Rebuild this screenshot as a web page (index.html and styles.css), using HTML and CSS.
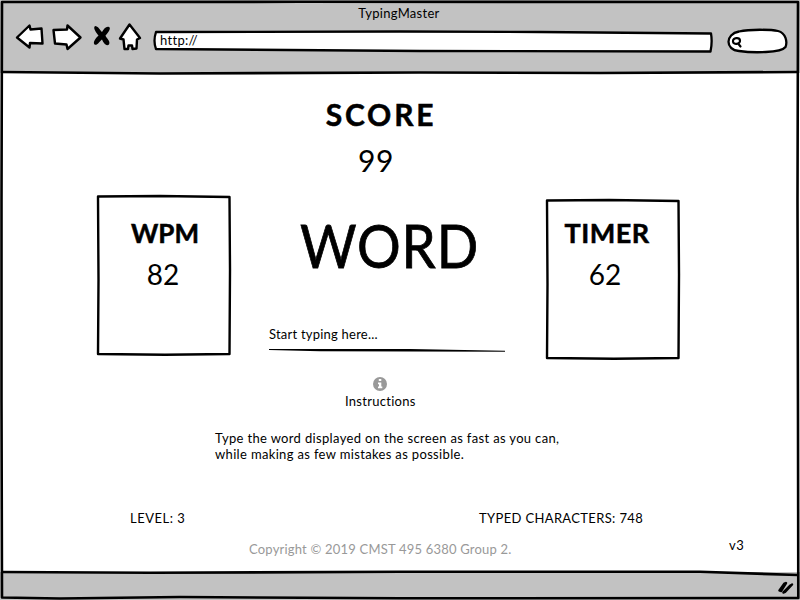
FILE: index.html
```html
<!DOCTYPE html>
<html lang="en">
<head>
<meta charset="utf-8">
<title>TypingMaster</title>
<link rel="stylesheet" href="styles.css">
</head>
<body>
<div class="browser">
  <header class="chrome">
    <div class="title">TypingMaster</div>
    <div class="toolbar">
      <svg class="nav" width="128" height="32" viewBox="14 21 128 32">
        <g fill="#fff" stroke="#000" stroke-width="2.4" stroke-linejoin="round" stroke-linecap="round">
          <path d="M17 37.5 L29.5 25.500 L30.5 29.500 L41.500 28.5 L42.500 43.500 L30 43 L29.5 47.500 Z"/>
          <path d="M53.5 30 L67 29.5 L67.500 25.500 L80.5 37.5 L67.500 49 L66.5 44.5 L55 43.500 Z"/>
          <path d="M129.5 24.5 L140 38 L137 39.500 L136.500 48.500 L132.500 49 L132 45.500 L128.500 45.500 L128 49 L124.500 49 L123.500 39.500 L120 38.500 Z"/>
        </g>
        <path d="M95 26 C98 26 100 30 102 32 C104 29 106 26 109 27 C111.500 28 108 33 105.500 35.500 C106 38 111 41 109 44.500 C106 47 103 42 102 39.500 C99 42 97 46 94.500 44.500 C92.500 42 96 38 98.500 35.500 C96.500 33 92.500 28 95 26 Z" fill="#000"/>
      </svg>
      <div class="address">
        <svg class="outline" width="562" height="24" viewBox="152 29 562 24"><path d="M156 32 L400 31.500 L540 32 L711 33.500 Q712.500 42 710.500 51.500 L420 51 L156 49 Q153 41 156 32 Z" fill="#fff" stroke="#000" stroke-width="2.300" stroke-linejoin="round"/></svg>
        <span class="url">http://</span>
      </div>
      <svg class="search" width="62" height="28" viewBox="727 27 62 28">
        <path d="M739 51 C725 50 725 34 739 31.500 C750 29 771 29.500 778 31 C786 33 787.500 42 785.500 47 C781 53 753 53 739 51 Z" fill="#fff" stroke="#000" stroke-width="2.300"/>
        <path d="M733 41.500 C732.500 37.500 739.500 37 740 40.500 C740.500 44.500 733 45 733 41.500 M738.500 44 L740.500 46.500" fill="none" stroke="#000" stroke-width="2.200" stroke-linecap="round"/>
      </svg>
    </div>
  </header>

  <main class="page">
    <section class="score">
      <h1 class="heading score-heading">SCORE</h1>
      <div class="value score-value">99</div>
    </section>
    <section class="board">
      <div class="card card-wpm">
        <svg class="outline" width="136" height="162" viewBox="96 194 136 162"><path d="M98 196.500 L160 196 L229.500 197 L230 270 L229.500 354 L165 354.700 L98 354 L98.500 280 Z" fill="#fff" stroke="#000" stroke-width="2.400" stroke-linejoin="round"/></svg>
        <h2 class="heading card-heading wpm-heading">WPM</h2>
        <div class="value card-value">82</div>
      </div>
      <div class="play">
        <div class="word">WORD</div>
        <div class="prompt">Start typing here...</div>
        <svg class="rule" width="236" height="5" viewBox="269 348 236 5"><path d="M269 349 L410 349 L505 350.800 V351.800 L320 351.300 L269 350 Z"/></svg>
      </div>
      <div class="card card-timer">
        <svg class="outline" width="136" height="162" viewBox="96 194 136 162"><path d="M98 196.500 L160 196 L229.500 197 L230 270 L229.500 354 L165 354.700 L98 354 L98.500 280 Z" fill="#fff" stroke="#000" stroke-width="2.400" stroke-linejoin="round"/></svg>
        <h2 class="heading card-heading timer-heading">TIMER</h2>
        <div class="value card-value">62</div>
      </div>
    </section>
    <section class="help">
      <svg class="info" width="14" height="14" viewBox="0 0 14 14"><circle cx="7" cy="7" r="7" fill="#999"/><path d="M5.800 2 h2.500 v2 h-2.500z M5 5.500 h3.300 v4 h1 v1.700 H5 V9.500 h1 V7.200 H5z" fill="#fff"/></svg>
      <div class="help-label">Instructions</div>
      <p class="help-text"><span class="line line-a">Type the word displayed on the screen as fast as you can,</span><span class="line line-b">while making as few mistakes as possible.</span></p>
    </section>
    <section class="stats">
      <div class="level">LEVEL: 3</div>
      <div class="typed">TYPED CHARACTERS: 748</div>
    </section>
    <section class="legal">
      <div class="copyright">Copyright © 2019 CMST 495 6380 Group 2.</div>
      <div class="version">v3</div>
    </section>
  </main>

  <footer class="status">
    <svg class="grip" width="18" height="16" viewBox="778 579 18 16"><path d="M780.500 590.500 L785.500 583.500 M782 591 L787 583 M786 592 L793 584.500 M784.500 592.500 L791.500 585.500" stroke="#000" stroke-width="2.500" stroke-linecap="round"/></svg>
  </footer>

  <svg class="frame" width="800" height="600" viewBox="0 0 800 600">
    <g fill="none" stroke="#000" stroke-width="2.600" stroke-linejoin="round">
      <path d="M2 2 L300 1.800 L798 2 L797.500 200 L798 420 L798.300 598 L400 598.300 L180 597 L60 598.500 L2 597.500 L1.500 400 L1.500 200 Z"/>
      <path d="M2 72 L160 73.500 L420 72.500 L600 73 L798 72"/>
      <path d="M2 572 L150 572.800 L400 571.800 L700 571.800 L798 575"/>
    </g>
  </svg>
</div>
</body>
</html>
```
FILE: styles.css
```css
* { box-sizing: border-box; }
body {
  margin: 0;
  background: #fff;
  color: #000;
  font: 13px/16px Lato, "Liberation Sans", sans-serif;
  white-space: nowrap;
}
.browser {
  position: relative;
  display: flex;
  flex-direction: column;
  width: 800px;
  height: 600px;
  overflow: hidden;
}
.frame { position: absolute; inset: 0; pointer-events: none; }
.outline { position: absolute; top: 0; left: 0; }

.chrome { height: 73px; padding-top: 5px; background: #c2c2c2; }
.title { padding-right: 2px; text-align: center; letter-spacing: 0.3px; }
.toolbar { display: flex; align-items: flex-start; padding-left: 14px; }
.nav { flex: none; }
.address { position: relative; width: 562px; height: 24px; margin: 8px 13px 0 10px; padding: 3px 8px; }
.url { position: relative; letter-spacing: 0.3px; }
.search { flex: none; margin-top: 6px; }

.page { display: flex; flex-direction: column; height: 499px; }
.heading { margin: 0; font-weight: 700; text-align: center; -webkit-text-stroke: 0.5px #000; }
.value { text-align: center; }
.score { width: 200px; margin-left: 281px; padding-top: 21px; }
.score-heading { font-size: 30px; line-height: 40px; letter-spacing: 2.8px; }
.score-value { width: 190px; font-size: 30px; line-height: 40px; margin-top: 6px; letter-spacing: 0.5px; }

.board { display: flex; height: 184px; margin-top: 14px; padding-left: 96px; }
.card { position: relative; width: 136px; height: 162px; flex: none; }
.card-heading { position: relative; font-size: 27px; line-height: 36px; padding-top: 21px; letter-spacing: 0.5px; }
.wpm-heading { padding-left: 2px; letter-spacing: 0; font-size: 26px; }
.card-value { position: relative; width: 134px; font-size: 28px; line-height: 36px; margin-top: 5px; }
.card-timer { margin-top: 4px; }
.timer-heading { width: 124px; padding-top: 17px; }
.card-timer .card-value { width: 120px; }
.play { width: 313px; padding: 13px 0 0 37px; }
.word { padding-left: 31px; font-size: 60px; line-height: 76px; letter-spacing: 1px; transform: scaleX(0.91); transform-origin: 31px 50%; -webkit-text-stroke: 0.8px #000; }
.prompt { margin-top: 43px; letter-spacing: 0.22px; }
.rule { display: block; margin-top: 6px; }

.help { width: 370px; margin: -1px 0 0 215px; }
.info { display: block; margin-left: 158px; }
.help-label { margin: 2px 0 0 130px; letter-spacing: 0.28px; }
.help-text { margin: 21px 0 0; }
.line { display: block; letter-spacing: 0.34px; }
.stats { display: flex; gap: 293px; margin-top: 48px; padding-left: 130px; letter-spacing: 0.35px; }
.level { width: 56px; letter-spacing: 0.5px; }
.legal { display: flex; padding: 15px 0 0 249px; }
.copyright { width: 480px; color: #999; letter-spacing: 0.2px; }
.version { margin-top: -4px; letter-spacing: 0.5px; }

.status { display: flex; justify-content: flex-end; height: 28px; padding: 7px 5px 0 0; background: #c2c2c2; }
```
